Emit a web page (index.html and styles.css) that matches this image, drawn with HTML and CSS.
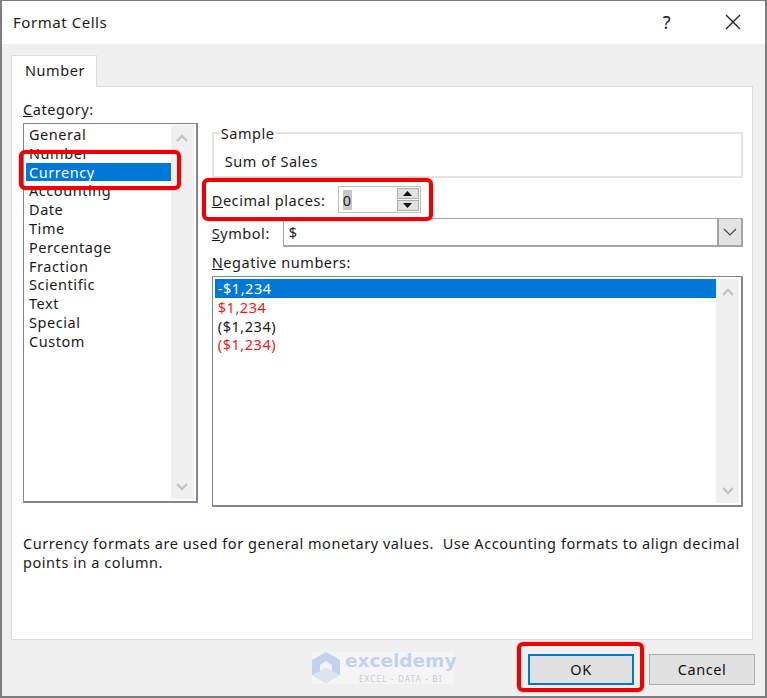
FILE: index.html
```html
<!DOCTYPE html>
<html lang="en">
<head>
  <meta charset="UTF-8">
  <title>Format Cells</title>
  <link rel="stylesheet" href="styles.css">
</head>
<body>
  <div class="dialog">
    <div class="titlebar">
      <span class="title">Format Cells</span>
      <span class="help">?</span>
      <svg class="close" width="16" height="16" viewBox="0 0 16 16"><path d="M1 1 L15 15 M15 1 L1 15" stroke="#222" stroke-width="1.4" fill="none"/></svg>
    </div>

    <div class="content">
      <div class="tabs"><div class="tab">Number</div></div>

      <div class="panel">
        <div class="columns">
          <div class="left">
            <div class="label"><u>C</u>ategory:</div>
            <div class="listbox category">
              <div class="items">
                <div class="item">General</div>
                <div class="item">Number</div>
                <div class="item selected">Currency</div>
                <div class="item">Accounting</div>
                <div class="item">Date</div>
                <div class="item">Time</div>
                <div class="item">Percentage</div>
                <div class="item">Fraction</div>
                <div class="item">Scientific</div>
                <div class="item">Text</div>
                <div class="item">Special</div>
                <div class="item">Custom</div>
              </div>
              <div class="scroll">
                <svg width="14" height="8" viewBox="0 0 14 8"><path d="M2 7 L7 2 L12 7" stroke="#c4c4c4" stroke-width="2.4" fill="none"/></svg>
                <svg width="14" height="8" viewBox="0 0 14 8"><path d="M2 1 L7 6 L12 1" stroke="#c4c4c4" stroke-width="2.4" fill="none"/></svg>
              </div>
              <div class="redbox box-currency"></div>
            </div>
          </div>

          <div class="right">
            <fieldset class="sample">
              <legend>Sample</legend>
              <div class="sample-value">Sum of Sales</div>
            </fieldset>

            <div class="decimal-row">
              <span class="decimal-label"><u>D</u>ecimal places:</span>
              <div class="spin">
                <div class="spin-field"><span class="spin-value">0</span></div>
                <div class="spin-btns">
                  <div class="spin-btn"><svg width="9" height="5" viewBox="0 0 9 5"><path d="M4.5 0 L9 5 L0 5 Z" fill="#111"/></svg></div>
                  <div class="spin-btn"><svg width="9" height="5" viewBox="0 0 9 5"><path d="M0 0 L9 0 L4.5 5 Z" fill="#111"/></svg></div>
                </div>
              </div>
              <div class="redbox box-decimal"></div>
            </div>

            <div class="symbol-row">
              <span class="symbol-label"><u>S</u>ymbol:</span>
              <div class="select">
                <span class="select-value">$</span>
                <div class="select-btn"><svg width="14" height="8" viewBox="0 0 14 8"><path d="M1 1 L7 7 L13 1" stroke="#444" stroke-width="1.2" fill="none"/></svg></div>
              </div>
            </div>

            <div class="label neg-label"><u>N</u>egative numbers:</div>
            <div class="listbox negative">
              <div class="items">
                <div class="item selected">-$1,234</div>
                <div class="item red">$1,234</div>
                <div class="item">($1,234)</div>
                <div class="item red">($1,234)</div>
              </div>
              <div class="scroll">
                <svg width="14" height="8" viewBox="0 0 14 8"><path d="M2 7 L7 2 L12 7" stroke="#c4c4c4" stroke-width="2.4" fill="none"/></svg>
                <svg width="14" height="8" viewBox="0 0 14 8"><path d="M2 1 L7 6 L12 1" stroke="#c4c4c4" stroke-width="2.4" fill="none"/></svg>
              </div>
            </div>
          </div>
        </div>

        <p class="description">Currency formats are used for general monetary values.&nbsp; Use Accounting formats to align decimal points in a column.</p>
      </div>
    </div>

    <div class="footer">
      <div class="watermark">
        <svg class="wm-logo" width="28" height="31" viewBox="0 0 28 31">
          <path d="M14 0 L28 8 L28 23 L14 31 L0 23 L0 8 Z" fill="#c3d0ee"/>
          <path d="M14 16 L28 23 L14 31 L0 23 Z" fill="#dfe3ec"/>
          <path d="M14 9 L20 13 L20 19 L14 16 L8 19 L8 13 Z" fill="#f2f3f7"/>
        </svg>
        <div class="wm-text">
          <div class="wm-name">exceldemy</div>
          <div class="wm-sub">EXCEL - DATA - BI</div>
        </div>
      </div>
      <div class="btn-wrap">
        <button class="btn btn-ok">OK</button>
        <div class="redbox box-ok"></div>
      </div>
      <button class="btn">Cancel</button>
    </div>
  </div>
</body>
</html>
```

FILE: styles.css
```css
* {
  box-sizing: border-box;
}
body {
  margin: 0;
  background: #fff;
  font-family: "Noto Sans", sans-serif;
  font-size: 14.5px;
  letter-spacing: 0.55px;
  color: #1a1a1a;
}
.dialog {
  width: 767px;
  height: 698px;
  background: #f0f0f0;
  border: 2px solid #7d7d7d;
  border-width: 1px 2px 2px 2px;
  display: flex;
  flex-direction: column;
}

/* title bar */
.titlebar {
  height: 43px;
  background: #fff;
  display: flex;
  align-items: center;
  padding: 0 24px 2px 11px;
}
.title {
  font-size: 15px;
  flex: 1;
}
.help {
  font-size: 18px;
  margin-right: 54px;
}

.content {
  padding: 11px 12px 0 9px;
}
.tabs {
  display: flex;
  height: 31px;
}
.tab {
  width: 86px;
  height: 32px;
  background: #fff;
  border: 1px solid #dcdcdc;
  border-bottom: none;
  padding: 4px 0 0 13px;
  position: relative;
  z-index: 1;
}
.panel {
  height: 554px;
  background: #fff;
  border: 1px solid #dcdcdc;
  padding: 13px 9px 0 11px;
}
.columns {
  display: flex;
  gap: 14px;
}
.left {
  width: 175px;
}
.right {
  width: 532px;
  padding-top: 24px;
}
.label {
  height: 23px;
  line-height: 19px;
}

/* lists */
.listbox {
  border: 1px solid #82878f;
  border-width: 1px 2px 2px 1px;
  background: #fff;
  display: flex;
  position: relative;
  padding: 2px;
}
.category {
  height: 380px;
  padding-top: 1px;
}
.negative {
  height: 231px;
}
.items {
  flex: 1;
}
.item {
  height: 18.8px;
  line-height: 18.8px;
  padding-left: 3px;
}
.item.selected {
  background: #0078d7;
  color: #fff;
}
.item.red {
  color: #f01818;
}
.scroll {
  width: 23px;
  background: #f0f0f0;
  display: flex;
  flex-direction: column;
  justify-content: space-between;
  align-items: center;
  padding: 9px 0 8px;
}

/* sample box */
.sample {
  margin: 0;
  padding: 0 0 0 11px;
  height: 54px;
  border: 2px solid #e4e4e4;
}
.sample legend {
  padding: 0 1px;
  margin-left: -5px;
  line-height: 18px;
}
.sample-value {
  line-height: 20px;
  margin-top: 9px;
}

/* decimal row */
.decimal-row {
  display: flex;
  align-items: center;
  position: relative;
  height: 27px;
  margin-top: 8px;
}
.decimal-label {
  width: 126px;
}
.spin {
  width: 83px;
  height: 27px;
  border: 1px solid #bfbfbf;
  background: #fff;
  display: flex;
  align-items: center;
  padding: 0 1px 0 4px;
}
.spin-field {
  flex: 1;
}
.spin-value {
  background: #c8c8c8;
}
.spin-btns {
  width: 22px;
  height: 23px;
  display: flex;
  flex-direction: column;
  gap: 1px;
}
.spin-btn {
  flex: 1;
  background: #e1e1e1;
  border: 1px solid #adadad;
  display: flex;
  align-items: center;
  justify-content: center;
}

/* symbol row */
.symbol-row {
  display: flex;
  align-items: center;
  margin-top: 5px;
  height: 29px;
}
.symbol-label {
  width: 71px;
}
.select {
  flex: 1;
  height: 29px;
  border: 1px solid #a5a5a5;
  border-width: 1px 2px 2px 1px;
  display: flex;
  align-items: center;
  padding-left: 5px;
}
.select-value {
  flex: 1;
}
.select-btn {
  width: 24px;
  height: 100%;
  background: #e3e3e3;
  border-left: 2px solid #a5a5a5;
  display: flex;
  align-items: center;
  justify-content: center;
}
.neg-label {
  margin-top: 6px;
}

.description {
  margin: 27px 0 0 0;
  line-height: 19px;
}

/* footer */
.footer {
  flex: 1;
  display: flex;
  align-items: flex-start;
  padding: 14px 10px 0 310px;
}
.watermark {
  width: 142px;
  height: 32px;
  display: flex;
  gap: 5px;
  background: #f5f5f6;
  margin-top: -2px;
  margin-right: 74px;
  letter-spacing: 0;
}
.wm-logo {
  flex-shrink: 0;
}
.wm-text {
  margin-top: -2px;
}
.wm-name {
  font-family: "DejaVu Sans", sans-serif;
  font-weight: bold;
  font-size: 18.5px;
  line-height: 22px;
  color: #c3d1f0;
}
.wm-sub {
  font-size: 8px;
  line-height: 11px;
  margin-top: 1px;
  letter-spacing: 1.2px;
  color: #c4c9d3;
  text-align: center;
}
.btn-wrap {
  position: relative;
  margin-right: 15px;
}
.btn {
  display: block;
  width: 106px;
  height: 31px;
  background: #e1e1e1;
  border: 1px solid #adadad;
  font-family: "Noto Sans", sans-serif;
  font-size: 14.5px;
  letter-spacing: 0.55px;
  color: #111;
  padding: 0 0 2px;
}
.btn-ok {
  border: 2px solid #0078d7;
}

/* red highlights drawn on the screenshot */
.redbox {
  position: absolute;
  border: 4px solid #f00000;
  border-radius: 6px;
  pointer-events: none;
  box-shadow: 0 0 2px rgba(0, 0, 0, 0.4);
}
.box-currency {
  left: -5px;
  top: 26px;
  width: 162px;
  height: 40px;
}
.box-decimal {
  left: -10px;
  top: -8px;
  width: 231px;
  height: 43px;
}
.box-ok {
  left: -11px;
  top: -12px;
  width: 127px;
  height: 50px;
}
```
